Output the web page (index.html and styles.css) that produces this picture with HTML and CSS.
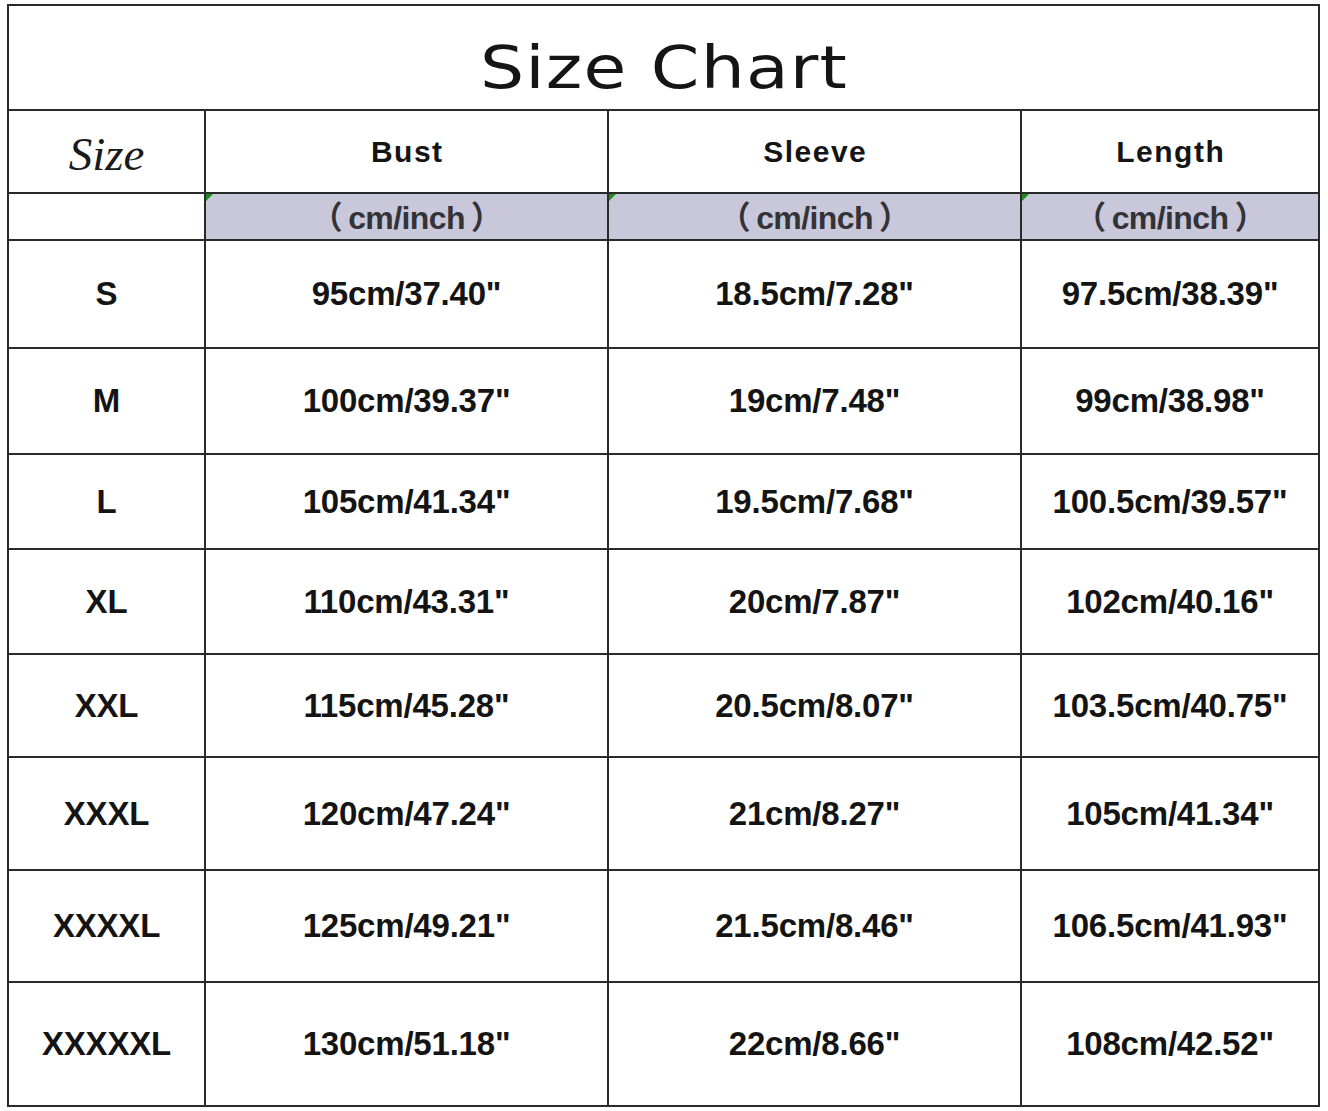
FILE: index.html
```html
<!DOCTYPE html>
<html>
<head>
<meta charset="utf-8">
<link rel="stylesheet" href="styles.css">
</head>
<body>
<table class="chart">
  <colgroup>
    <col class="c-size"><col class="c-bust"><col class="c-sleeve"><col class="c-length">
  </colgroup>
  <tr class="r-title"><td colspan="4" class="title"><span>Size Chart</span></td></tr>
  <tr class="r-head">
    <td class="size-head">Size</td>
    <td class="head">Bust</td>
    <td class="head">Sleeve</td>
    <td class="head">Length</td>
  </tr>
  <tr class="r-unit">
    <td></td>
    <td class="unit"><span class="paren">（</span>cm/inch<span class="paren">）</span></td>
    <td class="unit"><span class="paren">（</span>cm/inch<span class="paren">）</span></td>
    <td class="unit"><span class="paren">（</span>cm/inch<span class="paren">）</span></td>
  </tr>
  <tr class="r1"><td>S</td><td>95cm/37.40"</td><td>18.5cm/7.28"</td><td>97.5cm/38.39"</td></tr>
  <tr class="r2"><td>M</td><td>100cm/39.37"</td><td>19cm/7.48"</td><td>99cm/38.98"</td></tr>
  <tr class="r3"><td>L</td><td>105cm/41.34"</td><td>19.5cm/7.68"</td><td>100.5cm/39.57"</td></tr>
  <tr class="r4"><td>XL</td><td>110cm/43.31"</td><td>20cm/7.87"</td><td>102cm/40.16"</td></tr>
  <tr class="r5"><td>XXL</td><td>115cm/45.28"</td><td>20.5cm/8.07"</td><td>103.5cm/40.75"</td></tr>
  <tr class="r6"><td>XXXL</td><td>120cm/47.24"</td><td>21cm/8.27"</td><td>105cm/41.34"</td></tr>
  <tr class="r7"><td>XXXXL</td><td>125cm/49.21"</td><td>21.5cm/8.46"</td><td>106.5cm/41.93"</td></tr>
  <tr class="r8"><td>XXXXXL</td><td>130cm/51.18"</td><td>22cm/8.66"</td><td>108cm/42.52"</td></tr>
</table>
</body>
</html>
```

FILE: styles.css
```css
html, body {
  margin: 0;
  background: #ffffff;
}
body {
  padding: 4px 0 0 7px;
}
.chart {
  border-collapse: collapse;
  table-layout: fixed;
  width: 1311px;
  font-family: "Liberation Sans", Arial, sans-serif;
  font-weight: bold;
  color: #141414;
}
.c-size { width: 197px; }
.c-bust { width: 403px; }
.c-sleeve { width: 413px; }
.c-length { width: 298px; }

.chart td {
  border: 2px solid #2a2a2a;
  text-align: center;
  vertical-align: middle;
  padding: 0;
  font-size: 33px;
  line-height: 38px;
  letter-spacing: -0.2px;
}
.r-title { height: 105px; }
.r-head { height: 83px; }
.r-unit { height: 47px; }
.r1 { height: 108px; }
.r2 { height: 106px; }
.r3 { height: 95px; }
.r4 { height: 105px; }
.r5 { height: 103px; }
.r6 { height: 113px; }
.r7 { height: 112px; }
.r8 { height: 124px; }

.chart td.title {
  padding-top: 20px;
  line-height: 60px;
}
.title span {
  display: inline-block;
  vertical-align: top;
  line-height: 60px;
  font-family: "DejaVu Sans", sans-serif;
  font-weight: normal;
  font-size: 59px;
  letter-spacing: 1px;
  transform: scaleX(1.18);
  color: #151515;
}
.chart td.size-head {
  font-family: "Liberation Serif", "Times New Roman", serif;
  font-style: italic;
  font-weight: normal;
  font-size: 47px;
  line-height: 50px;
  letter-spacing: 0;
  padding-top: 4px;
  color: #1a1a1a;
}
.chart td.head {
  font-size: 30px;
  letter-spacing: 1.5px;
  text-indent: 1.5px;
}
.chart td.unit {
  position: relative;
  background: #c8c8da;
  color: #333338;
  font-size: 32px;
  line-height: 36px;
  letter-spacing: -0.6px;
  font-family: "Liberation Sans", "Noto Sans CJK JP", sans-serif;
  padding: 2px 0 0;
}
.unit .paren {
  display: inline-block;
  margin: 0 6px;
}
.chart td.unit::before {
  content: "";
  position: absolute;
  left: 0;
  top: 0;
  width: 0;
  height: 0;
  border-top: 7px solid #1f8a1f;
  border-right: 7px solid transparent;
}
```
